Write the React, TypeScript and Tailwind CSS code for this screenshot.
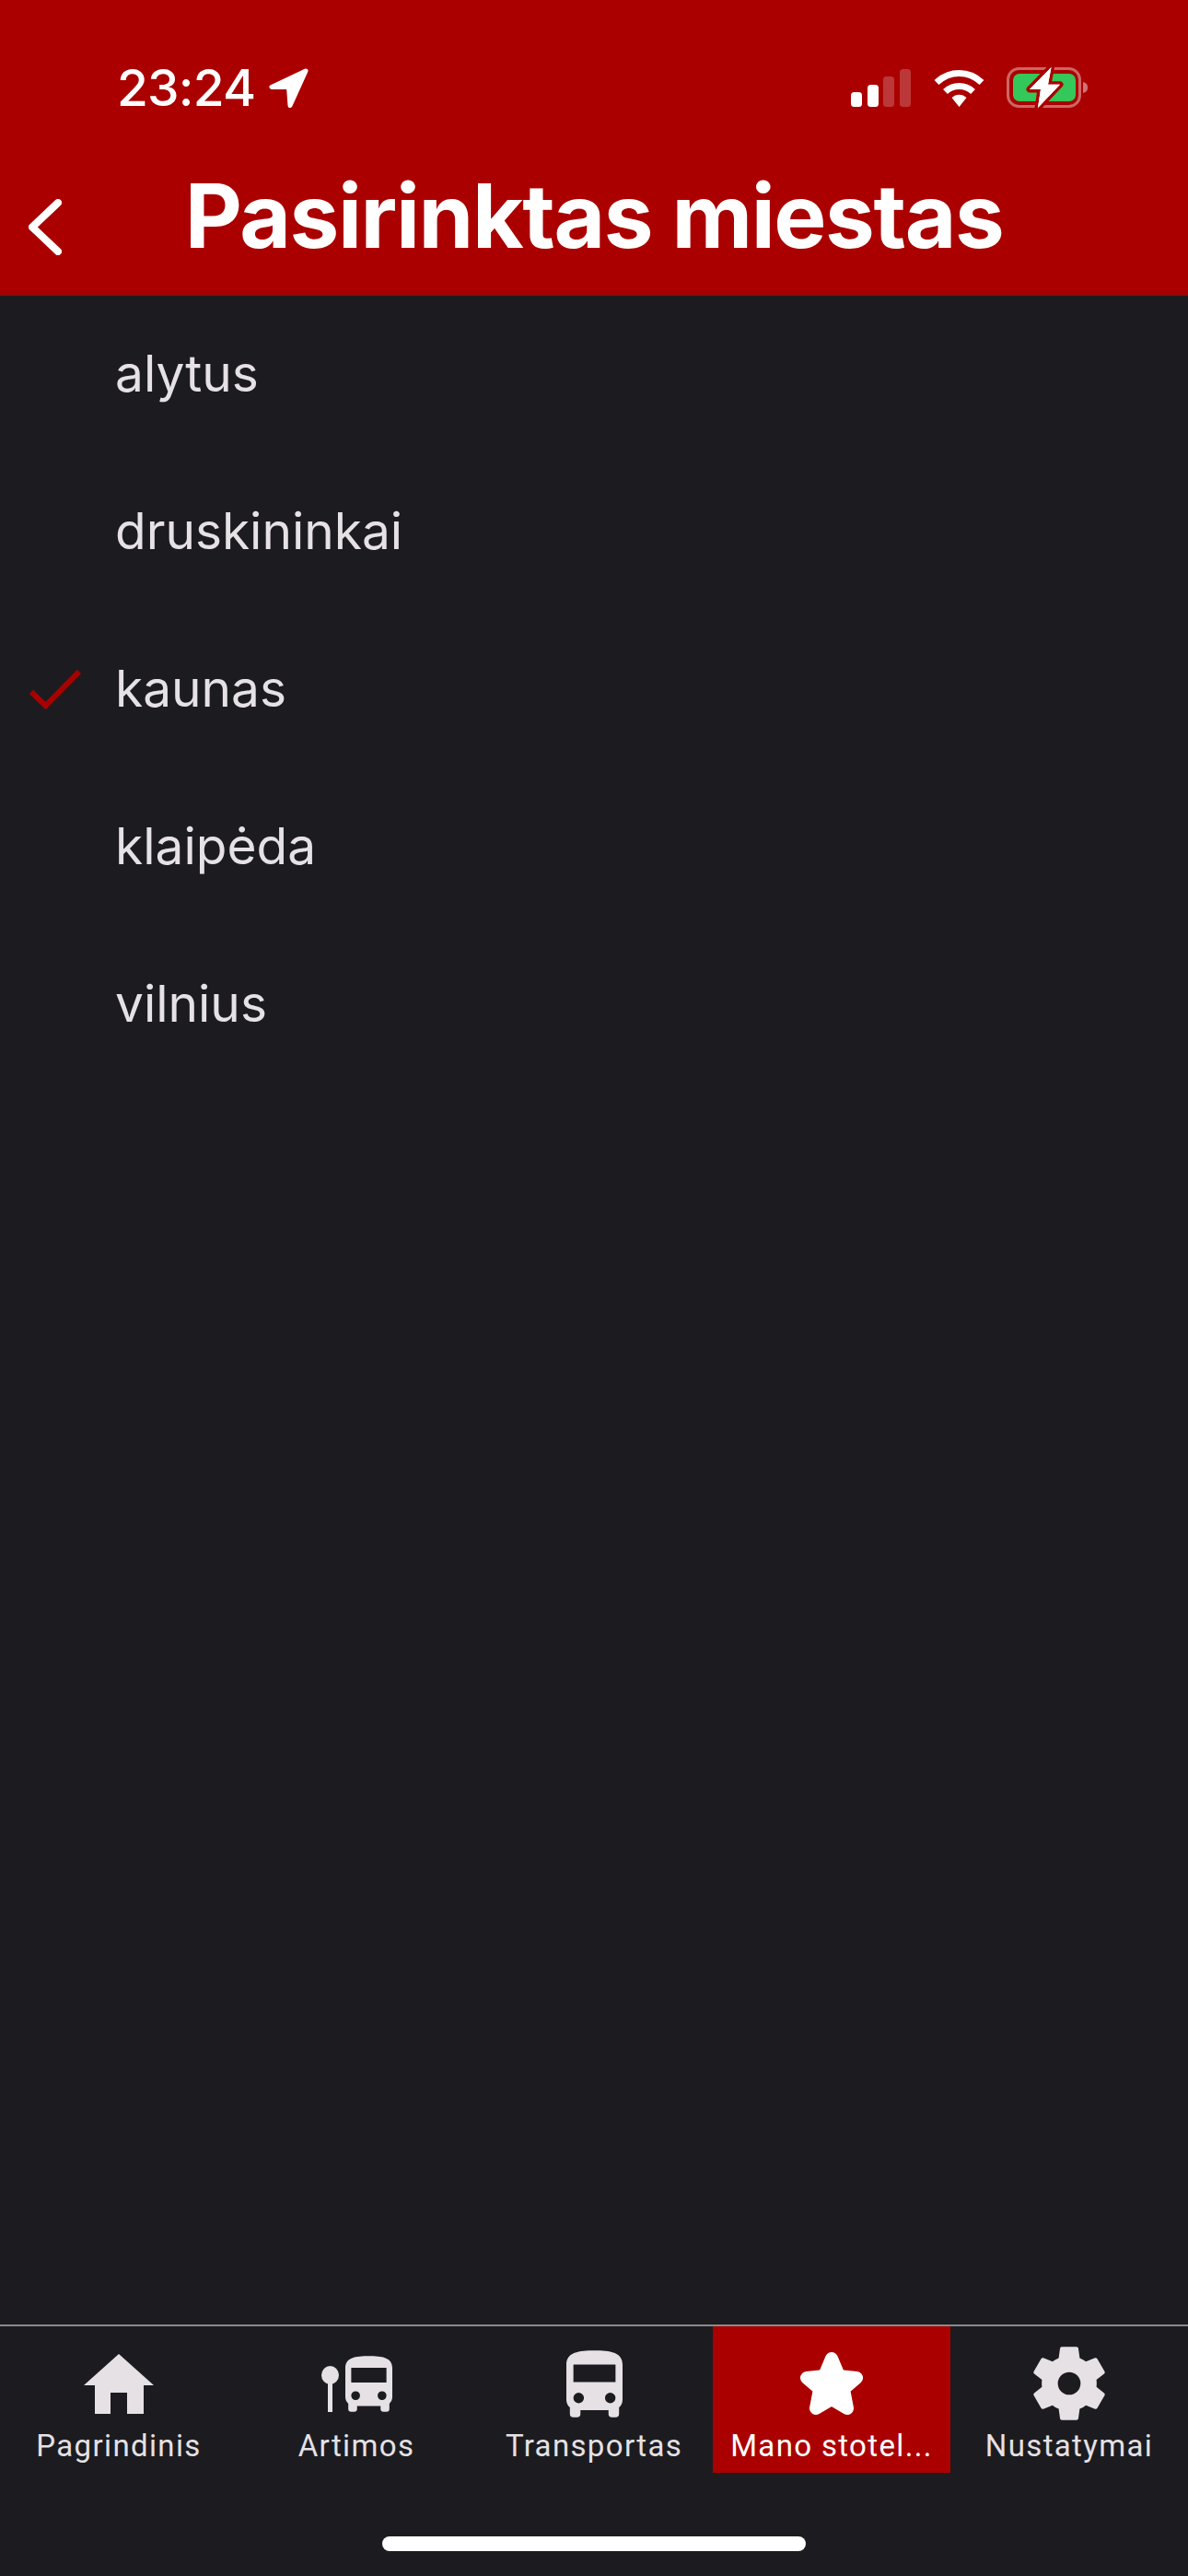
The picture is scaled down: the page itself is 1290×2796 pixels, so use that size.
const BUS = "M18,11H6V6H18M16.5,17A1.5,1.5 0 0,1 15,15.5A1.5,1.5 0 0,1 16.5,14A1.5,1.5 0 0,1 18,15.5A1.5,1.5 0 0,1 16.5,17M7.5,17A1.5,1.5 0 0,1 6,15.5A1.5,1.5 0 0,1 7.5,14A1.5,1.5 0 0,1 9,15.5A1.5,1.5 0 0,1 7.5,17M4,16C4,16.88 4.39,17.67 5,18.22V20A1,1 0 0,0 6,21H7A1,1 0 0,0 8,20V19H16V20A1,1 0 0,0 17,21H18A1,1 0 0,0 19,20V18.22C19.61,17.67 20,16.88 20,16V6C20,2.5 16.42,2 12,2C7.58,2 4,2.5 4,6V16Z";

function HomeIcon() {
  return (
    <svg width="76" height="65" viewBox="0 0 76 65" fill="#e5e1e5">
      <path d="M38 0L76 34H65V65H47V42H29V65H12V34H0Z" />
    </svg>
  );
}

function StopIcon() {
  return (
    <svg width="77" height="61" viewBox="0 0 77 61" fill="#e5e1e5">
      <ellipse cx="9.5" cy="21" rx="9.5" ry="10" />
      <rect x="7" y="28" width="5" height="33" />
      <svg x="26" y="0" width="51" height="61" viewBox="4 2 16 19">
        <path d={BUS} />
      </svg>
    </svg>
  );
}

function BusIcon() {
  return (
    <svg width="61" height="73" viewBox="4 2 16 19" fill="#e5e1e5">
      <path d={BUS} />
    </svg>
  );
}

function StarIcon() {
  return (
    <svg width="70" height="70" viewBox="0 0 70 70" fill="#ffffff" stroke="#ffffff" strokeWidth="14" strokeLinejoin="round">
      <path d="M35 8L43 27L62 29L48 41L52 62L35 52L18 62L22 41L8 29L27 27Z" />
    </svg>
  );
}

function GearIcon() {
  return (
    <svg width="78" height="80" viewBox="2.2 2 19.6 20" fill="#e5e1e5" fillRule="evenodd">
      <path d="M12,15.1A3.1,3.1 0 0,1 8.9,12A3.1,3.1 0 0,1 12,8.9A3.1,3.1 0 0,1 15.1,12A3.1,3.1 0 0,1 12,15.1M19.43,12.97C19.47,12.65 19.5,12.33 19.5,12C19.5,11.67 19.47,11.34 19.43,11L21.54,9.37C21.73,9.22 21.78,8.95 21.66,8.73L19.66,5.27C19.54,5.05 19.27,4.96 19.05,5.05L16.56,6.05C16.04,5.66 15.5,5.32 14.87,5.07L14.5,2.42C14.46,2.18 14.25,2 14,2H10C9.75,2 9.54,2.18 9.5,2.42L9.13,5.07C8.5,5.32 7.96,5.66 7.44,6.05L4.95,5.05C4.73,4.96 4.46,5.05 4.34,5.27L2.34,8.73C2.21,8.95 2.27,9.22 2.46,9.37L4.57,11C4.53,11.34 4.5,11.67 4.5,12C4.5,12.33 4.53,12.65 4.57,12.97L2.46,14.63C2.27,14.78 2.21,15.05 2.34,15.27L4.34,18.73C4.46,18.95 4.73,19.03 4.95,18.95L7.44,17.94C7.96,18.34 8.5,18.68 9.13,18.93L9.5,21.58C9.54,21.82 9.75,22 10,22H14C14.25,22 14.46,21.82 14.5,21.58L14.87,18.93C15.5,18.67 16.04,18.34 16.56,17.94L19.05,18.95C19.27,19.03 19.54,18.95 19.66,18.73L21.66,15.27C21.78,15.05 21.73,14.78 21.54,14.63L19.43,12.97Z" />
    </svg>
  );
}

function ArrowIcon() {
  return (
    <svg width="43" height="43" viewBox="0 0 43 43" fill="#ffffff" stroke="#ffffff" strokeWidth="5" strokeLinejoin="round">
      <path d="M40 3L3 20.5H21.5L23 40.5Z" />
    </svg>
  );
}

function SignalIcon() {
  return (
    <svg width="65" height="41" viewBox="0 0 65 41" fill="#ffffff">
      <rect x="0" y="25" width="12" height="16" rx="3.5" />
      <rect x="18" y="17" width="12" height="24" rx="3.5" />
      <rect x="35" y="8" width="12" height="33" rx="3.5" fillOpacity="0.22" />
      <rect x="53" y="0" width="12" height="41" rx="3.5" fillOpacity="0.22" />
    </svg>
  );
}

function WifiIcon() {
  return (
    <svg width="55" height="41" viewBox="0 0 55 41" fill="none" stroke="#ffffff" strokeWidth="7">
      <path d="M3 14.5C17 1 38 1 52 14.5" />
      <path d="M12.5 24.5C21 16.5 34 16.5 42.5 24.5" />
      <path d="M19.5 31L27.5 41L35.5 31C31 26.5 24 26.5 19.5 31Z" fill="#ffffff" stroke="none" />
    </svg>
  );
}

function BatteryIcon() {
  return (
    <svg width="90" height="44" viewBox="0 0 90 44" fill="none">
      <rect x="1.5" y="1.5" width="78" height="41" rx="12" stroke="#ffffff" strokeOpacity="0.4" strokeWidth="3" />
      <rect x="7" y="7" width="68" height="30" rx="7" fill="#34c759" />
      <path d="M83 16C87 17 88 19 88 22C88 25 87 27 83 28Z" fill="#ffffff" fillOpacity="0.45" />
      <path d="M48.5 0L25 24H37L34 44L58 18.7H45Z" fill="#ffffff" stroke="#aa0000" strokeWidth="7" paintOrder="stroke" strokeLinejoin="round" />
      <path d="M48.5 0L25 24H37L34 44L58 18.7H45Z" fill="#ffffff" />
    </svg>
  );
}

function BackIcon() {
  return (
    <svg width="36" height="61" viewBox="0 0 36 61" fill="none" stroke="#ffffff" strokeWidth="8" strokeLinecap="round" strokeLinejoin="round">
      <path d="M32 4L4 30.5L32 57" />
    </svg>
  );
}

function CheckIcon() {
  return (
    <svg width="56" height="44" viewBox="0 0 56 44" fill="none" stroke="#aa0000" strokeWidth="6">
      <path d="M2 24L17.5 39L54 2" />
    </svg>
  );
}

const cities = ["alytus", "druskininkai", "kaunas", "klaipėda", "vilnius"];

const tabs = [
  { label: "Pagrindinis", icon: <HomeIcon />, active: false },
  { label: "Artimos", icon: <StopIcon />, active: false },
  { label: "Transportas", icon: <BusIcon />, active: false },
  { label: "Mano stotel...", icon: <StarIcon />, active: true },
  { label: "Nustatymai", icon: <GearIcon />, active: false },
];

export default function App() {
  return (
    <div className="flex h-[2796px] w-[1290px] flex-col overflow-hidden bg-[#1c1c20] font-['Inter',sans-serif]">
      <header className="flex h-[321px] flex-col border-b border-[#26343a] bg-[#aa0000]">
        <div className="flex h-[44px] mt-[73px] items-center justify-between pl-[127px] pr-[107px]">
          <div className="flex items-center gap-[15px]">
            <span className="text-[55px] leading-[44px] font-medium tracking-[-0.8px] text-white">23:24</span>
            <ArrowIcon />
          </div>
          <div className="flex items-center">
            <SignalIcon />
            <span className="ml-[25px]"><WifiIcon /></span>
            <span className="ml-[24px]"><BatteryIcon /></span>
          </div>
        </div>
        <div className="mt-[61px] grid h-[112px] grid-cols-[1fr_auto_1fr] items-center px-[31px]">
          <div className="mt-[24px] flex"><BackIcon /></div>
          <h1 className="text-[96px] leading-[112px] font-bold tracking-[-1.4px] text-white">Pasirinktas miestas</h1>
          <div />
        </div>
      </header>

      <main className="flex-1">
        <ul>
          {cities.map((city) => (
            <li key={city} className="flex h-[171px] items-center">
              <span className="flex w-[125px] justify-start pl-[32px]">
                {city === "kaunas" && <CheckIcon />}
              </span>
              <span className="mb-[3px] text-[55px] leading-[68px] text-[#e5e1e5]">{city}</span>
            </li>
          ))}
        </ul>
      </main>

      <nav className="flex h-[273px] flex-col border-t-2 border-[#8a8a8c]">
        <div className="flex h-[159px]">
          {tabs.map((tab) => (
            <div key={tab.label} className={`flex w-[258px] flex-col items-center pt-[22px] ${tab.active ? "bg-[#aa0000]" : ""}`}>
              <div className="flex h-[80px] items-center justify-center">{tab.icon}</div>
              <span className={`mt-[8px] font-['Roboto',sans-serif] text-[33px] leading-[40px] tracking-[1.35px] ${tab.active ? "text-white" : "text-[#e5e1e5]"}`}>
                {tab.label}
              </span>
            </div>
          ))}
        </div>
        <div className="mt-[69px] flex justify-center">
          <div className="h-[16px] w-[460px] rounded-full bg-white" />
        </div>
      </nav>
    </div>
  );
}
